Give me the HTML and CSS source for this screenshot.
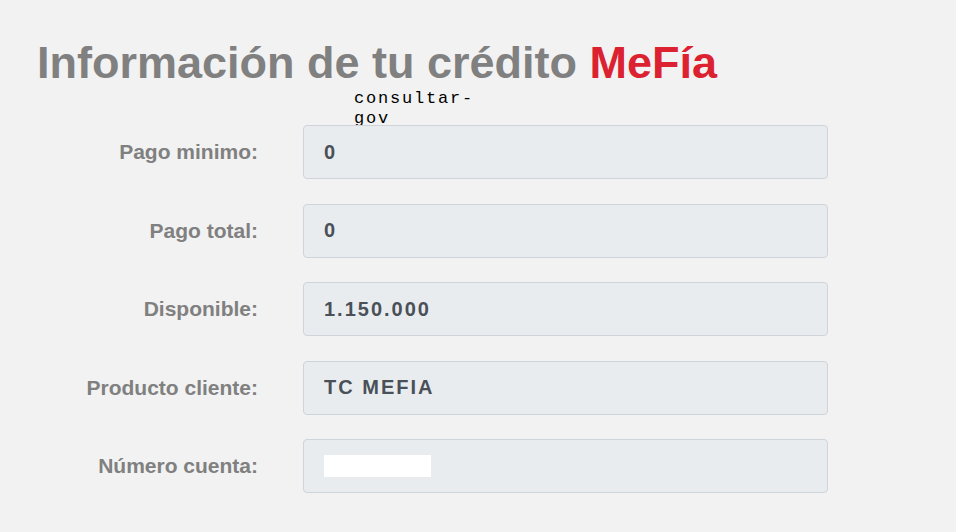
FILE: index.html
```html
<!DOCTYPE html>
<html>
<head>
  <meta charset="utf-8">
  <title>Información de tu crédito MeFía</title>
  <link rel="stylesheet" href="styles.css">
</head>
<body>
  <div id="credito">
    <h1 class="title">Información de tu crédito <span class="brand">MeFía</span></h1>
    <div class="tag">consultar-gov</div>
    <div class="rows">
      <div class="row">
        <label class="label">Pago minimo:</label>
        <div class="field">0</div>
      </div>
      <div class="row">
        <label class="label">Pago total:</label>
        <div class="field">0</div>
      </div>
      <div class="row">
        <label class="label">Disponible:</label>
        <div class="field">1.150.000</div>
      </div>
      <div class="row">
        <label class="label">Producto cliente:</label>
        <div class="field">TC MEFIA</div>
      </div>
      <div class="row">
        <label class="label">Número cuenta:</label>
        <div class="field"><span class="hidden-value"></span></div>
      </div>
    </div>
  </div>
</body>
</html>
```

FILE: styles.css
```css
body {
  margin: 0;
  background-color: #f2f2f2;
  font-family: "Liberation Sans", Arial, sans-serif;
}
.title {
  margin: 40px 0 0 37px;
  font-size: 45px;
  line-height: 1;
  font-weight: bold;
  color: #808080;
}
.brand {
  color: #dc2130;
}
.tag {
  margin: 4px 0 0 354px;
  width: 125px;
  height: 36px;
  font-family: "Liberation Mono", monospace;
  font-size: 17px;
  line-height: 20px;
  letter-spacing: 1.8px;
  color: #000;
}
.rows {
  display: flex;
  flex-direction: column;
  gap: 24.5px;
}
.row {
  display: flex;
  align-items: center;
}
.label {
  width: 258px;
  margin-right: 45px;
  text-align: right;
  font-size: 21px;
  font-weight: bold;
  color: #808080;
}
.field {
  box-sizing: border-box;
  display: flex;
  align-items: center;
  width: 525px;
  height: 54px;
  padding-left: 20px;
  background-color: #e9ecef;
  border: 1px solid #ced4da;
  border-radius: 4px;
  font-size: 20px;
  font-weight: bold;
  letter-spacing: 2px;
  color: #495057;
}
.hidden-value {
  display: block;
  width: 107px;
  height: 22px;
  background-color: #fff;
}
```
